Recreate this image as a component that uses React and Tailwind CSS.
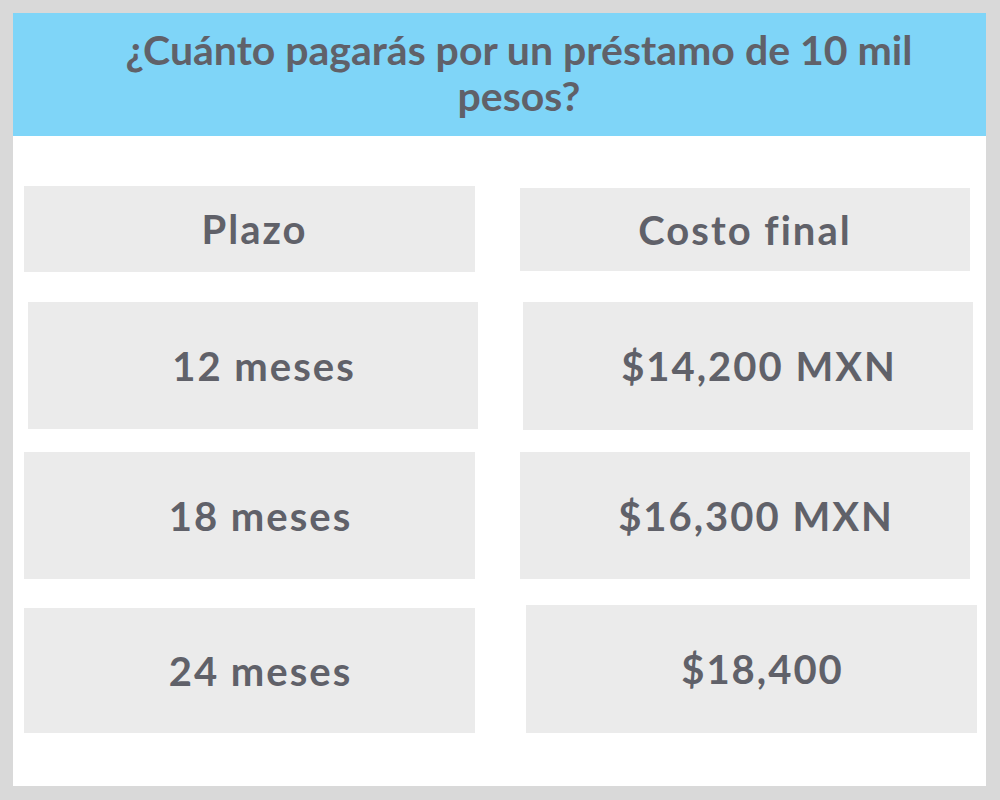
import React from 'react';

const Cell = ({ children, className, data }) => (
    <div
        className={`flex items-center justify-center shrink-0 bg-[#ebebeb] text-[#606169] font-bold text-[40px] tracking-[2px] ${
            data ? 'pl-[22px]' : ''
        } ${className}`}
    >
        {children}
    </div>
);

const App = () => {
    return (
        <div
            className="w-[1000px] h-[800px] bg-[#d9d9d9] pt-[13px] pl-[13px]"
            style={{ fontFamily: 'Lato, "Noto Sans", sans-serif' }}
        >
            <div className="w-[973px] h-[773px] bg-white">
                <div className="h-[123px] bg-[#7fd5f8] flex justify-center pt-[14px]">
                    <h1 className="w-[820px] ml-[39px] text-center text-[41px] leading-[46px] font-bold text-[#606169]">
                        ¿Cuánto pagarás por un préstamo de 10 mil pesos?
                    </h1>
                </div>

                <div className="pt-[50px]">
                    <div className="flex items-start">
                        <Cell className="ml-[11px] pl-[10px] w-[451px] h-[86px]">Plazo</Cell>
                        <Cell className="ml-[45px] mt-[2px] w-[450px] h-[83px]">Costo final</Cell>
                    </div>

                    <div className="flex items-start mt-[30px]">
                        <Cell data className="ml-[15px] w-[450px] h-[127px]">12 meses</Cell>
                        <Cell data className="ml-[45px] w-[450px] h-[128px]">$14,200 MXN</Cell>
                    </div>

                    <div className="flex items-start mt-[22px]">
                        <Cell data className="ml-[11px] w-[451px] h-[127px]">18 meses</Cell>
                        <Cell data className="ml-[45px] w-[450px] h-[127px]">$16,300 MXN</Cell>
                    </div>

                    <div className="flex items-start mt-[26px]">
                        <Cell data className="ml-[11px] mt-[3px] w-[451px] h-[125px]">24 meses</Cell>
                        <Cell data className="ml-[51px] w-[451px] h-[128px]">$18,400</Cell>
                    </div>
                </div>
            </div>
        </div>
    );
};

export default App;
